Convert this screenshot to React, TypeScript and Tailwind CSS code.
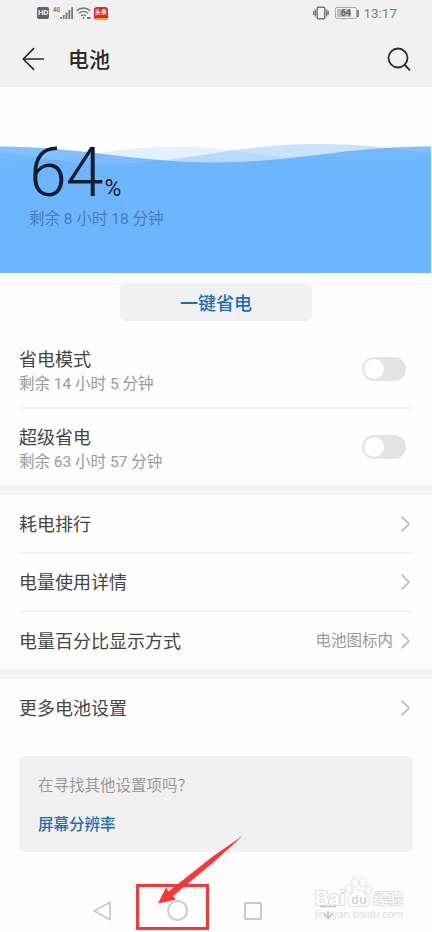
import { useState } from 'react';

interface ToggleItem {
  id: string;
  title: string;
  remaining: string;
}

interface LinkItem {
  title: string;
  value?: string;
}

const toggles: ToggleItem[] = [
  { id: 'saver', title: '省电模式', remaining: '剩余 14 小时 5 分钟' },
  { id: 'ultra', title: '超级省电', remaining: '剩余 63 小时 57 分钟' },
];

const links: LinkItem[] = [
  { title: '耗电排行' },
  { title: '电量使用详情' },
  { title: '电量百分比显示方式', value: '电池图标内' },
];

function StatusBar() {
  return (
    <div className="flex h-[26px] items-center justify-between pl-[37px] pr-[35px]">
      <div className="flex items-center">
        <div className="flex h-[12px] w-[12px] items-center justify-center rounded-[2px] bg-[#626262] text-[8px] font-bold leading-none tracking-[-0.3px] text-[#eeeeee]">
          HD
        </div>
        {/* Mobile signal */}
        <svg className="ml-[4px]" width="21" height="14" viewBox="0 0 21 14" fill="#777">
          <text x="0" y="6" fontSize="7" fontWeight="700" textLength="7" lengthAdjust="spacingAndGlyphs" fontFamily="Roboto, sans-serif">4G</text>
          <path d="M1 9.500h1v3H1zM3.500 9.500h1v3h-1z" fill="#ccc" />
          <path d="M7 11h1.800v2H7zM9.800 9h1.800v4H9.800zM12.600 6.500h1.800V13h-1.800zM15.400 4h1.800v9h-1.800zM18.200 1.200H20V13h-1.800z" />
        </svg>
        {/* Wi-Fi */}
        <svg className="ml-[2px]" width="16" height="14" viewBox="0 0 16 14" fill="none" stroke="#777" strokeWidth="1.400">
          <path d="M.8 4.800C4.500 1 10.500 1 14.200 4.800M3 7.300c2.500-2.600 6.500-2.600 9 0M5.200 9.800c1.300-1.300 3.300-1.300 4.600 0" />
          <circle cx="7.500" cy="12" r="1" fill="#777" stroke="none" />
          <path d="M11 12h3.500" strokeWidth="2" />
        </svg>
        <div className="ml-[2px] flex h-[13px] w-[14px] flex-col items-center overflow-hidden rounded-[3px] bg-[#ee2020] text-white">
          <span className="flex h-[11px] items-center whitespace-nowrap text-[6px] font-bold leading-none">头条</span>
          <span className="h-[2px] w-full bg-[#f7a61c]" />
        </div>
      </div>

      <div className="flex items-center">
        {/* Vibrate */}
        <svg width="16" height="14" viewBox="0 0 16 14" fill="none" stroke="#757575" strokeWidth="1.300">
          <rect x="4.200" y="1.200" width="7.600" height="11.600" rx="1" strokeWidth="1.500" />
          <path d="M2.300 3.500v7M.7 5v4M13.700 3.500v7M15.300 5v4" />
        </svg>
        <div className="ml-[6px] flex h-[12px] w-[22px] items-center rounded-[2px] border border-[#aaaaaa] p-px">
          <div className="flex h-full w-[14px] items-center justify-center bg-[#bdbdbd] pl-[3px] text-[9px] font-bold leading-none text-[#606060]">
            64
          </div>
        </div>
        <div className="h-[7px] w-[2px] bg-[#888888]" />
        <span className="ml-[4px] pt-px text-[13.500px] leading-none text-[#808080]">13:17</span>
      </div>
    </div>
  );
}

function Header() {
  return (
    <header className="h-[87px] bg-[#f1f1f1]">
      <StatusBar />
      <div className="flex h-[66px] items-center pl-[22px] pr-[21px]">
        <svg width="23" height="24" viewBox="0 0 23 24" fill="none" stroke="#2b2b2b" strokeWidth="1.700" strokeLinecap="round" strokeLinejoin="round">
          <path d="M21.300 12H1.300M11.600 1.700 1.300 12l10.300 10.300" />
        </svg>
        <h1 className="ml-[23px] flex-1 pt-[3px] text-[21px] font-medium leading-[23px] text-[#2b2b2b]">电池</h1>
        <svg width="25" height="25" viewBox="0 0 25 25" fill="none" stroke="#2b2b2b" strokeWidth="1.800" strokeLinecap="round">
          <circle cx="12" cy="11" r="9.500" />
          <path d="m18.800 18 4.700 4.800" />
        </svg>
      </div>
    </header>
  );
}

function BatteryHero() {
  return (
    <section className="relative h-[186px] overflow-hidden">
      {/* Overlapping waves */}
      <svg className="absolute left-0 top-0" width="431" height="186" viewBox="0 0 431 186" fill="#4ea5ff">
        <path opacity=".14" d="M0 77C50 77 115 59.500 175 59.500S290 76 345 76s65-3 86-6v116H0z" />
        <path opacity=".3" d="M0 65c40 4 68 12 108 12 70 0 130-20 207-20 50 0 80 5 116 9v120H0z" />
        <path opacity=".7" d="M0 59.500c80 0 135 16 216 16 78 0 128-16 215-16V186H0z" />
      </svg>
      <div className="relative pl-[29px] pt-[52px]">
        <div className="flex items-baseline text-[#111d28]">
          <span className="text-[68px] font-light leading-[68px] tracking-[-1px]">64</span>
          <span className="ml-[2px] text-[23px] leading-none">%</span>
        </div>
        <p className="pt-px text-[15.500px] leading-[22px] text-[#4b7cae]">剩余 8 小时 18 分钟</p>
      </div>
    </section>
  );
}

function Chevron() {
  return (
    <svg width="10" height="16" viewBox="0 0 10 16" fill="none" stroke="#b9b9b9" strokeWidth="1.700" strokeLinecap="round" strokeLinejoin="round">
      <path d="M1.200 1.200 8 8l-6.800 6.800" />
    </svg>
  );
}

function LinkRow({ title, value }: LinkItem) {
  return (
    <div className="flex h-[58px] items-center pr-[2px]">
      <span className="flex-1 pt-[2px] text-[18px] leading-[24px] text-[#454545]">{title}</span>
      {value && <span className="mr-[8px] pt-[2px] text-[15.500px] text-[#999999]">{value}</span>}
      <Chevron />
    </div>
  );
}

function NavBar() {
  return (
    <nav className="relative h-[80px]">
      {/* Watermark */}
      <svg className="absolute left-[312px] top-[23px] overflow-visible" width="98" height="54" viewBox="0 0 98 54" fill="#fff" stroke="#dddddd" strokeWidth="1" strokeLinejoin="round">
        <g fontFamily="'Liberation Sans', 'Noto Sans CJK SC', sans-serif" fontWeight="700">
          <text x="3" y="30" fontSize="20" textLength="30" lengthAdjust="spacingAndGlyphs" strokeWidth="2" paintOrder="stroke">Bai</text>
          <path d="M46.500 14.500c4.500 0 6 4 9 6.500 4.500 4 2 11-4 10.500-4-.5-6-.5-10 0-6 .5-8-6.500-4-10.500 3-2.500 4.500-6.500 9-6.500z" />
          <ellipse cx="37" cy="14" rx="3.300" ry="4.300" />
          <ellipse cx="43" cy="7.500" rx="3.300" ry="4.500" />
          <ellipse cx="51" cy="7.500" rx="3.300" ry="4.500" />
          <ellipse cx="56.500" cy="15" rx="3.300" ry="4.300" />
          <text x="39" y="29" fontSize="13" fill="#d6d6d6" stroke="none">du</text>
          <text x="61" y="29" fontSize="15" fontWeight="400" strokeWidth="1.800" paintOrder="stroke">经验</text>
          <text x="3" y="43" fontSize="11" textLength="88" fontWeight="400" fill="#e0e0e0" stroke="none">jingyan.baidu.com</text>
        </g>
      </svg>

      <div className="relative flex items-center pl-[93px] pt-[48px]">
        <svg width="19" height="20" viewBox="0 0 19 20" fill="none" stroke="#c8c8c8" strokeWidth="1.700" strokeLinejoin="round">
          <path d="M17 1.200v17.600L1.200 10z" />
        </svg>
        <div className="ml-[55px] h-[21px] w-[21px] rounded-full border-2 border-[#cccccc]" />
        <div className="ml-[56px] h-[18px] w-[18px] rounded-[2px] border-2 border-[#c8c8c8]" />
        <svg className="ml-[58px]" width="18" height="18" viewBox="0 0 18 18" fill="none" stroke="#c4c4c4" strokeWidth="1.600">
          <path d="M0 4.500h16M8 9v8M3.500 11.500 8 16l4.500-4.500" />
        </svg>
      </div>

      {/* Pointer to the home key */}
      <div className="absolute left-[136px] top-[32px] h-[46px] w-[73px] border-[3px] border-[#fc3636]" />
      <svg className="absolute left-[156px] top-[-18px]" width="90" height="72" viewBox="0 0 90 72" fill="#fc3636">
        <path d="M87 1.500 59 27 17 62l3 3.500L2 69.500l8-16 2.500 4L56 23z" />
      </svg>
    </nav>
  );
}

export default function App() {
  const [enabled, setEnabled] = useState<Record<string, boolean>>({});

  const toggle = (id: string) => setEnabled({ ...enabled, [id]: !enabled[id] });

  return (
    <div className="h-[932px] w-[432px] overflow-hidden bg-[#fefefe] font-[Roboto,'Noto_Sans_CJK_SC',sans-serif]">
      <Header />
      <BatteryHero />

      <div className="flex justify-center pt-[10px]">
        <button className="h-[38px] w-[192px] rounded-[6px] bg-[#f1f1f1] pt-[3px] text-[18px] font-medium leading-none text-[#1c6dbd]">
          一键省电
        </button>
      </div>

      {/* Power saving modes */}
      <section className="mt-[10px] h-[154px] divide-y-2 divide-[#f4f4f4] px-[19px]">
        {toggles.map((item) => (
          <div key={item.id} className="flex h-[78px] items-center justify-between pr-[7px] last:h-[76px]">
            <div className="pt-[5px]">
              <div className="text-[18px] leading-[25px] text-[#454545]">{item.title}</div>
              <div className="text-[15.500px] leading-[25px] text-[#999999]">{item.remaining}</div>
            </div>
            <button
              role="switch"
              aria-checked={!!enabled[item.id]}
              onClick={() => toggle(item.id)}
              className={`flex h-[24px] w-[44px] items-center rounded-full px-[2px] ${enabled[item.id] ? 'justify-end bg-[#1c6dbd]' : 'bg-[#e4e4e4]'}`}
            >
              <span className="h-5 w-5 rounded-full bg-white" />
            </button>
          </div>
        ))}
      </section>

      <div className="h-[10px] bg-[#f4f4f4]" />

      <section className="h-[174px] divide-y-2 divide-[#f4f4f4] px-[19px] pt-px">
        {links.map((item) => (
          <LinkRow key={item.title} {...item} />
        ))}
      </section>

      <div className="h-[10px] bg-[#f4f4f4]" />

      <section className="px-[19px]">
        <LinkRow title="更多电池设置" />
      </section>

      {/* Related settings */}
      <section className="mx-[19px] mt-[19px] h-[96px] rounded-[6px] bg-[#f1f1f1] pl-[19px] pt-[18px]">
        <p className="text-[15.500px] leading-[24px] text-[#999999]">在寻找其他设置项吗？</p>
        <p className="mt-[15px] text-[15.500px] font-medium leading-[24px] text-[#1c6dbd]">屏幕分辨率</p>
      </section>

      <NavBar />
    </div>
  );
}
